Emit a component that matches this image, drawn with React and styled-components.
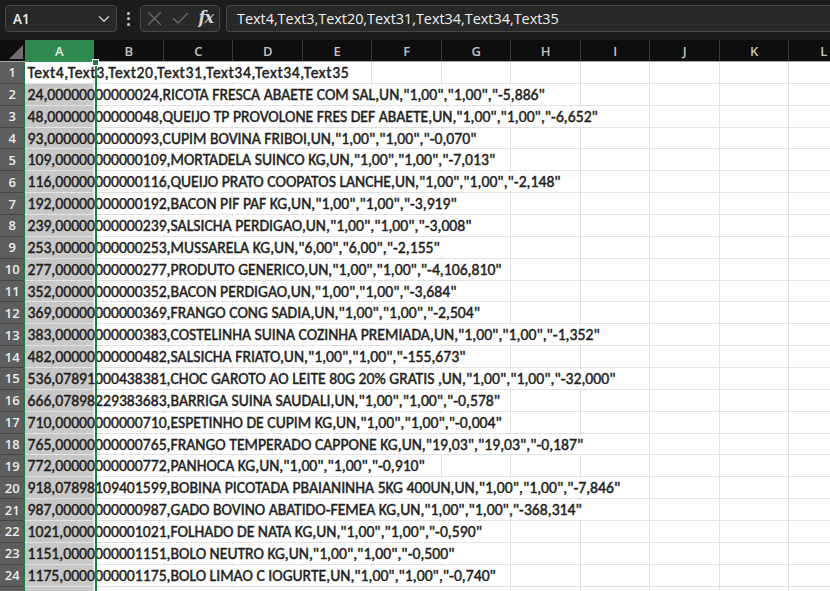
import React from "react";
import styled, { createGlobalStyle } from "styled-components";

const Global = createGlobalStyle`
  html, body { margin: 0; padding: 0; background: #1f1f1f; overflow: hidden; }
  #root { width: 830px; height: 591px; overflow: hidden; }
`;

const COLW = 69.5;
const ROWH = 21.87;
const HEADW = 24.5;
const COLS = ["A", "B", "C", "D", "E", "F", "G", "H", "I", "J", "K", "L"];

const rows = [
  "Text4,Text3,Text20,Text31,Text34,Text34,Text35",
  '24,00000000000024,RICOTA FRESCA ABAETE COM SAL,UN,"1,00","1,00","-5,886"',
  '48,00000000000048,QUEIJO TP PROVOLONE FRES DEF ABAETE,UN,"1,00","1,00","-6,652"',
  '93,00000000000093,CUPIM BOVINA FRIBOI,UN,"1,00","1,00","-0,070"',
  '109,00000000000109,MORTADELA SUINCO KG,UN,"1,00","1,00","-7,013"',
  '116,00000000000116,QUEIJO PRATO COOPATOS LANCHE,UN,"1,00","1,00","-2,148"',
  '192,00000000000192,BACON PIF PAF KG,UN,"1,00","1,00","-3,919"',
  '239,00000000000239,SALSICHA PERDIGAO,UN,"1,00","1,00","-3,008"',
  '253,00000000000253,MUSSARELA KG,UN,"6,00","6,00","-2,155"',
  '277,00000000000277,PRODUTO GENERICO,UN,"1,00","1,00","-4,106,810"',
  '352,00000000000352,BACON PERDIGAO,UN,"1,00","1,00","-3,684"',
  '369,00000000000369,FRANGO CONG SADIA,UN,"1,00","1,00","-2,504"',
  '383,00000000000383,COSTELINHA SUINA COZINHA PREMIADA,UN,"1,00","1,00","-1,352"',
  '482,00000000000482,SALSICHA FRIATO,UN,"1,00","1,00","-155,673"',
  '536,07891000438381,CHOC GAROTO AO LEITE 80G 20% GRATIS ,UN,"1,00","1,00","-32,000"',
  '666,07898229383683,BARRIGA SUINA SAUDALI,UN,"1,00","1,00","-0,578"',
  '710,00000000000710,ESPETINHO DE CUPIM KG,UN,"1,00","1,00","-0,004"',
  '765,00000000000765,FRANGO TEMPERADO CAPPONE KG,UN,"19,03","19,03","-0,187"',
  '772,00000000000772,PANHOCA KG,UN,"1,00","1,00","-0,910"',
  '918,07898109401599,BOBINA PICOTADA PBAIANINHA 5KG 400UN,UN,"1,00","1,00","-7,846"',
  '987,00000000000987,GADO BOVINO ABATIDO-FEMEA KG,UN,"1,00","1,00","-368,314"',
  '1021,0000000001021,FOLHADO DE NATA KG,UN,"1,00","1,00","-0,590"',
  '1151,0000000001151,BOLO NEUTRO KG,UN,"1,00","1,00","-0,500"',
  '1175,0000000001175,BOLO LIMAO C IOGURTE,UN,"1,00","1,00","-0,740"',
  '1190,0000000001190,BOLO DE FUBA KG,UN,"1,00","1,00","-0,410"',
];

const Window = styled.div`
  width: 830px;
  height: 591px;
  display: flex;
  flex-direction: column;
  background: #1f1f1f;
  font-family: "Open Sans", "Noto Sans", sans-serif;
`;

const Toolbar = styled.div`
  height: 40px;
  box-sizing: border-box;
  padding: 5px 0 8px 5px;
  display: flex;
  align-items: stretch;
  background: #1c1c1c;
  flex-shrink: 0;
`;

const Box = styled.div`
  box-sizing: border-box;
  height: 27px;
  border: 1px solid #474747;
  border-radius: 4px;
  background: #282828;
  display: flex;
  align-items: center;
`;

const NameBox = styled(Box)`
  width: 112px;
  padding: 0 6px 0 7px;
  justify-content: space-between;
  color: #f0f0f0;
  font-size: 13.5px;
  font-weight: 600;
`;

const Dots = styled.div`
  width: 23px;
  display: flex;
  flex-direction: column;
  align-items: center;
  justify-content: center;
  gap: 2.5px;
  span {
    width: 3px;
    height: 3px;
    border-radius: 50%;
    background: #c8c8c8;
  }
`;

const FxGroup = styled(Box)`
  width: 80px;
  padding: 0 6px 0 6px;
  justify-content: space-between;
  margin-right: 6px;
`;

const FormulaBox = styled(Box)`
  flex: 1;
  border-right: none;
  border-radius: 4px 0 0 4px;
  padding-left: 10px;
  color: #f2f2f2;
  font-size: 14.4px;
  font-weight: 500;
  white-space: nowrap;
  overflow: hidden;
`;

const Sheet = styled.div`
  position: relative;
  flex: 1;
  background: #ffffff;
  overflow: hidden;
`;

const Grid = styled.div`
  display: grid;
  grid-template-columns: ${HEADW}px repeat(${COLS.length}, ${COLW}px);
  grid-template-rows: 22px;
  grid-auto-rows: ${ROWH}px;
`;

const Corner = styled.div`
  background: #0e0e0e;
  border-bottom: 1px solid #a8a8a8;
  position: relative;
  box-sizing: border-box;
  &::after {
    content: "";
    position: absolute;
    right: 2px;
    bottom: 2px;
    width: 0;
    height: 0;
    border-left: 14px solid transparent;
    border-bottom: 14px solid #6e6e6e;
  }
`;

const ColHeader = styled.div`
  box-sizing: border-box;
  background: ${(p) => (p.$selected ? "#2f8a4f" : "#0e0e0e")};
  color: ${(p) => (p.$selected ? "#e6f2ea" : "#c4c4c4")};
  border-bottom: 1px solid ${(p) => (p.$selected ? "#2f8a4f" : "#a8a8a8")};
  box-shadow: inset -1px 0 0 ${(p) => (p.$selected ? "#2f8a4f" : "#3a3a3a")};
  display: flex;
  align-items: center;
  justify-content: center;
  font-size: 13px;
  font-weight: 600;
  padding-top: 1px;
`;

const RowHeader = styled.div`
  box-sizing: border-box;
  background: #5e5e5e;
  color: #ececec;
  border-bottom: 1px solid #444444;
  display: flex;
  align-items: center;
  justify-content: center;
  font-size: 13px;
  font-weight: 600;
`;

const Cell = styled.div`
  box-sizing: border-box;
  border-right: 1px solid #e2e2e2;
  border-bottom: 1px solid #e2e2e2;
  background: ${(p) => (p.$fill ? "#c7c7c7" : "transparent")};
  min-width: 0;
`;

const FirstCell = styled(Cell)`
  position: relative;
  z-index: 1;
  overflow: visible;
  display: flex;
  align-items: center;
  padding-left: 3px;
`;

const CellText = styled.span`
  white-space: nowrap;
  font-family: "Carlito", "Lato", "Open Sans", sans-serif;
  font-size: 15.7px;
  font-weight: 400;
  -webkit-text-stroke: 0.45px #1e1e1e;
  letter-spacing: ${(p) => (p.$lower ? "0.6px" : "0")};
  color: #1e1e1e;
  line-height: 19px;
  height: 19px;
  padding-right: 6px;
  background: linear-gradient(90deg, transparent ${COLW - 3.5}px, #ffffff ${COLW - 3.5}px);
`;

const SelectionEdge = styled.div`
  position: absolute;
  top: 22px;
  bottom: 0;
  left: ${HEADW - 1.5}px;
  width: ${COLW}px;
  border-left: 2px solid #1f7a43;
  border-right: 2px solid #1f7a43;
  z-index: 2;
  pointer-events: none;
  &::after {
    content: "";
    position: absolute;
    right: -4px;
    top: -3px;
    width: 5px;
    height: 5px;
    background: #1f7a43;
    border: 1px solid #ffffff;
  }
`;

const Chevron = () => (
  <svg width="12" height="8" viewBox="0 0 12 8">
    <path d="M1.5 1.8 L6 6.2 L10.5 1.8" fill="none" stroke="#d0d0d0" strokeWidth="1.4" strokeLinecap="round" strokeLinejoin="round" />
  </svg>
);

const CancelIcon = () => (
  <svg width="15" height="15" viewBox="0 0 15 15">
    <path d="M1.5 1.5 L13.5 13.5 M13.5 1.5 L1.5 13.5" stroke="#6b6b6b" strokeWidth="1.3" strokeLinecap="round" />
  </svg>
);

const EnterIcon = () => (
  <svg width="17" height="13" viewBox="0 0 17 13">
    <path d="M1.5 6.5 L6 11 L15.5 1.5" fill="none" stroke="#6b6b6b" strokeWidth="1.3" strokeLinecap="round" strokeLinejoin="round" />
  </svg>
);

const FxLabel = styled.span`
  font-family: "DejaVu Serif", "Liberation Serif", serif;
  font-style: italic;
  font-weight: 700;
  font-size: 16px;
  color: #d4d4d4;
  letter-spacing: -1px;
  margin-top: -2px;
`;

export default function App() {
  return (
    <>
      <Global />
      <Window>
        <Toolbar>
          <NameBox>
            <span>A1</span>
            <Chevron />
          </NameBox>
          <Dots>
            <span />
            <span />
            <span />
          </Dots>
          <FxGroup>
            <CancelIcon />
            <EnterIcon />
            <FxLabel>fx</FxLabel>
          </FxGroup>
          <FormulaBox>Text4,Text3,Text20,Text31,Text34,Text34,Text35</FormulaBox>
        </Toolbar>
        <Sheet>
          <Grid>
            <Corner />
            {COLS.map((c, i) => (
              <ColHeader key={c} $selected={i === 0}>
                {c}
              </ColHeader>
            ))}
            {rows.map((text, r) => (
              <React.Fragment key={r}>
                <RowHeader>{r + 1}</RowHeader>
                <FirstCell $fill={r > 0}>
                  <CellText $lower={r === 0}>{text}</CellText>
                </FirstCell>
                {COLS.slice(1).map((c) => (
                  <Cell key={c} />
                ))}
              </React.Fragment>
            ))}
          </Grid>
          <SelectionEdge />
        </Sheet>
      </Window>
    </>
  );
}
